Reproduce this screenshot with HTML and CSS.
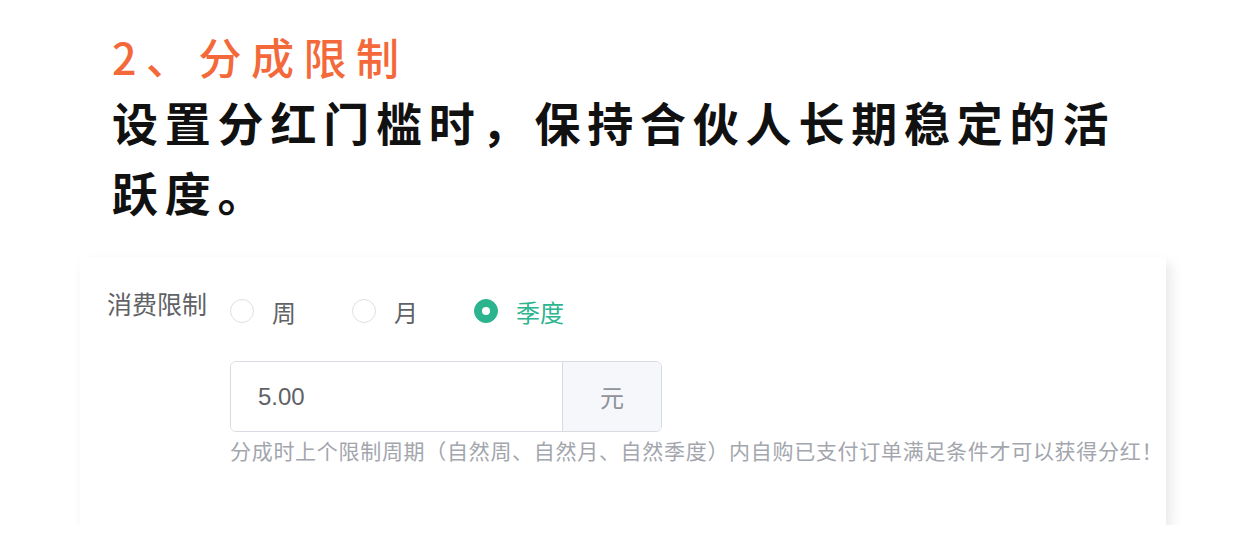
FILE: index.html
```html
<!DOCTYPE html>
<html lang="zh-CN">
<head>
    <meta charset="UTF-8">
    <meta name="viewport" content="width=device-width, initial-scale=1.0">
    <title>分成限制</title>
    <link rel="stylesheet" href="styles.css">
</head>
<body>
    <div class="intro">
        <h2 class="title">2、分成限制</h2>
        <p class="desc">设置分红门槛时，保持合伙人长期稳定的活跃度。</p>
    </div>

    <div class="card">
        <div class="form-item">
            <label class="form-label">消费限制</label>
            <div class="form-content">
                <div class="radio-group">
                    <label class="radio">
                        <span class="radio-dot"></span>
                        <span class="radio-text">周</span>
                    </label>
                    <label class="radio">
                        <span class="radio-dot"></span>
                        <span class="radio-text">月</span>
                    </label>
                    <label class="radio checked">
                        <span class="radio-dot"></span>
                        <span class="radio-text">季度</span>
                    </label>
                </div>

                <div class="input-group">
                    <input type="text" class="input" value="5.00">
                    <span class="append">元</span>
                </div>
                <div class="tip">分成时上个限制周期（自然周、自然月、自然季度）内自购已支付订单满足条件才可以获得分红！</div>
            </div>
        </div>
    </div>
</body>
</html>
```

FILE: styles.css
```css
body {
    margin: 0;
    background: #fff;
    font-family: "Noto Sans CJK SC", sans-serif;
}
.intro {
    padding: 30px 0 0 112px;
}
.title {
    margin: 0;
    font-size: 43px;
    line-height: 52px;
    font-weight: 500;
    letter-spacing: 9.5px;
    color: #f4693a;
}
.desc {
    margin: 4px 0 0;
    width: 1040px;
    font-size: 46px;
    line-height: 70px;
    font-weight: 600;
    letter-spacing: 6.8px;
    color: #111;
}
.card {
    margin: 31px 0 0 80px;
    width: 1086px;
    height: 268px;
    box-sizing: border-box;
    background: #fff;
    box-shadow: 5px 6px 12px rgba(0, 0, 0, 0.09);
    padding-left: 27px;
    font-family: "Liberation Sans", "Noto Sans CJK SC", sans-serif;
}
.form-item {
    display: flex;
}
.form-label {
    width: 123px;
    margin-top: 28px;
    font-size: 25px;
    line-height: 40px;
    color: #606266;
}
.form-content {
    padding-top: 34px;
}
.radio-group {
    display: flex;
    height: 40px;
    align-items: center;
}
.radio {
    display: flex;
    align-items: center;
    margin-right: 56px;
    font-size: 24px;
    color: #606266;
}
.radio-dot {
    width: 22px;
    height: 22px;
    border: 1px solid #dcdfe6;
    border-radius: 50%;
    margin-right: 18px;
    box-sizing: content-box;
}
.radio.checked {
    color: #2bb48e;
}
.radio.checked .radio-dot {
    background: #2bb48e;
    border-color: #2bb48e;
    position: relative;
}
.radio.checked .radio-dot::after {
    content: "";
    position: absolute;
    left: 7px;
    top: 7px;
    width: 8px;
    height: 8px;
    border-radius: 50%;
    background: #fff;
}
.input-group {
    display: flex;
    margin-top: 30px;
    width: 432px;
    height: 71px;
    border: 1px solid #d8dbe2;
    border-radius: 6px;
    box-sizing: border-box;
    overflow: hidden;
}
.input {
    flex: 1;
    min-width: 0;
    border: none;
    outline: none;
    padding: 0 27px;
    font-family: "Liberation Sans", sans-serif;
    font-size: 24px;
    color: #606266;
}
.append {
    width: 98px;
    display: flex;
    align-items: center;
    justify-content: center;
    background: #f5f7fa;
    border-left: 1px solid #d8dbe2;
    font-size: 24px;
    color: #909399;
}
.tip {
    margin-top: 9px;
    font-size: 21px;
    line-height: 22px;
    letter-spacing: 0.7px;
    color: #a3a6ad;
    white-space: nowrap;
}
```
